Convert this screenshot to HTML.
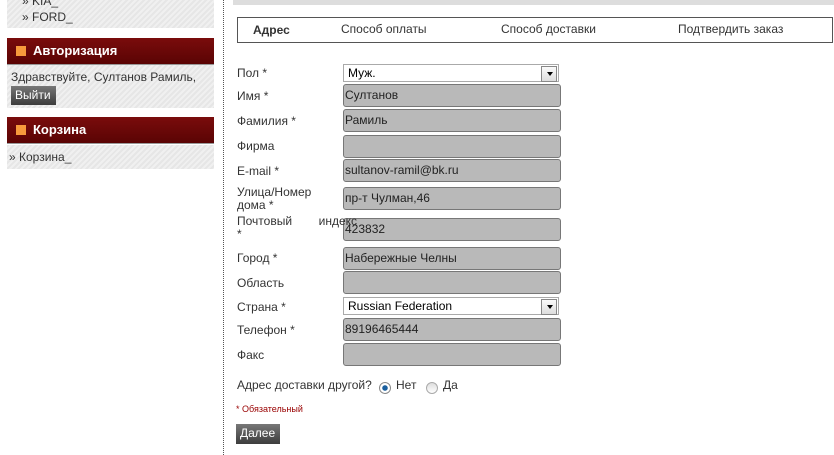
<!DOCTYPE html>
<html><head><meta charset="utf-8"><style>
*{margin:0;padding:0;box-sizing:border-box}
body{width:834px;height:455px;background:#fff;font-family:"Liberation Sans",Arial,sans-serif;font-size:12px;color:#333;position:relative;overflow:hidden}
.a{position:absolute}
.box{background:repeating-linear-gradient(135deg,#e6e6e6 0 2px,#f0f0f0 2px 4px)}
.hd{background:linear-gradient(#7a0c0c,#5a0404);color:#fff;font-weight:bold;font-size:13px;height:27px;line-height:26px;padding-left:26px;border-bottom:1px solid #999}
.hd:before{content:"";position:absolute;left:9px;top:8px;width:10px;height:10px;background:#f79a3c}
.lbl{position:absolute;left:237px;font-size:12px;color:#333}
.in{position:absolute;left:343px;width:218px;height:23px;background:#b9b9b9;border:1px solid #777;border-radius:3px;font-size:12px;line-height:21px;padding-left:1px;color:#222}
.sel{position:absolute;left:343px;width:216px;height:18px;background:#fff;border:1px solid #aaa;font-size:12px;line-height:16px;padding-left:4px;color:#000}
.sel:after{content:"";position:absolute;right:1px;top:1px;width:14px;height:14px;background:linear-gradient(#fafafa,#ddd);border:1px solid #888}
.sel i{position:absolute;right:5px;top:7px;border:3px solid transparent;border-top:4px solid #000;z-index:2}
.btn{position:absolute;background:linear-gradient(#777,#3c3c3c);color:#fff;font-size:12px}
</style></head><body>
<div class="a box" style="left:7px;top:0;width:207px;height:28px"></div>
<div class="a" style="left:22px;top:-6px;font-size:12px">» KIA_</div>
<div class="a" style="left:22px;top:10px;font-size:12px">» FORD_</div>
<div class="a hd" style="left:7px;top:38px;width:207px">Авторизация</div>
<div class="a box" style="left:7px;top:65px;width:207px;height:43px"></div>
<div class="a" style="left:11px;top:70px">Здравствуйте, Султанов Рамиль,</div>
<div class="btn" style="left:11px;top:86px;width:45px;height:19px;line-height:18px;padding-left:4px">Выйти</div>
<div class="a hd" style="left:7px;top:117px;width:207px">Корзина</div>
<div class="a box" style="left:7px;top:145px;width:207px;height:24px"></div>
<div class="a" style="left:9px;top:150px">» Корзина_</div>
<div class="a" style="left:223px;top:0;height:455px;border-left:1px dotted #555"></div>
<div class="a" style="left:233px;top:0;width:601px;height:5px;background:#ddd"></div>
<div class="a" style="left:237px;top:17px;width:596px;height:26px;border:1px solid #555"></div>
<div class="a" style="left:253px;top:23px;font-weight:bold">Адрес</div>
<div class="a" style="left:341px;top:22px">Способ оплаты</div>
<div class="a" style="left:501px;top:22px">Способ доставки</div>
<div class="a" style="left:678px;top:22px">Подтвердить заказ</div>
<div class="lbl" style="top:66px">Пол *</div><div class="sel" style="top:64px">Муж.<i></i></div>
<div class="lbl" style="top:89px">Имя *</div><div class="in" style="top:84px">Султанов</div>
<div class="lbl" style="top:114px">Фамилия *</div><div class="in" style="top:109px">Рамиль</div>
<div class="lbl" style="top:139px">Фирма</div><div class="in" style="top:135px"></div>
<div class="lbl" style="top:164px">E-mail *</div><div class="in" style="top:159px">sultanov-ramil@bk.ru</div>
<div class="lbl" style="top:186px;line-height:13px">Улица/Номер<br>дома *</div><div class="in" style="top:187px">пр-т Чулман,46</div>
<div class="lbl" style="top:215px;line-height:13px;width:120px;text-align:justify;text-align-last:justify;z-index:3">Почтовый индекс</div><div class="lbl" style="top:228px;line-height:13px">*</div><div class="in" style="top:218px">423832</div>
<div class="lbl" style="top:251px">Город *</div><div class="in" style="top:247px">Набережные Челны</div>
<div class="lbl" style="top:276px">Область</div><div class="in" style="top:271px"></div>
<div class="lbl" style="top:300px">Страна *</div><div class="sel" style="top:297px">Russian Federation<i></i></div>
<div class="lbl" style="top:323px">Телефон *</div><div class="in" style="top:318px">89196465444</div>
<div class="lbl" style="top:348px">Факс</div><div class="in" style="top:343px"></div>
<div class="lbl" style="top:378px">Адрес доставки другой?</div>
<div class="a" style="left:379px;top:382px;width:12px;height:12px;border-radius:50%;border:1px solid #888;background:radial-gradient(#1a5f9e 0 2.5px,#fff 3px)"></div>
<div class="a" style="left:396px;top:378px">Нет</div>
<div class="a" style="left:426px;top:382px;width:12px;height:12px;border-radius:50%;border:1px solid #aaa;background:linear-gradient(#ddd,#fff)"></div>
<div class="a" style="left:443px;top:378px">Да</div>
<div class="a" style="left:236px;top:404px;font-size:9px;color:#900">* Обязательный</div>
<div class="btn" style="left:236px;top:424px;width:44px;height:20px;line-height:19px;padding-left:4px">Далее</div>
</body></html>
